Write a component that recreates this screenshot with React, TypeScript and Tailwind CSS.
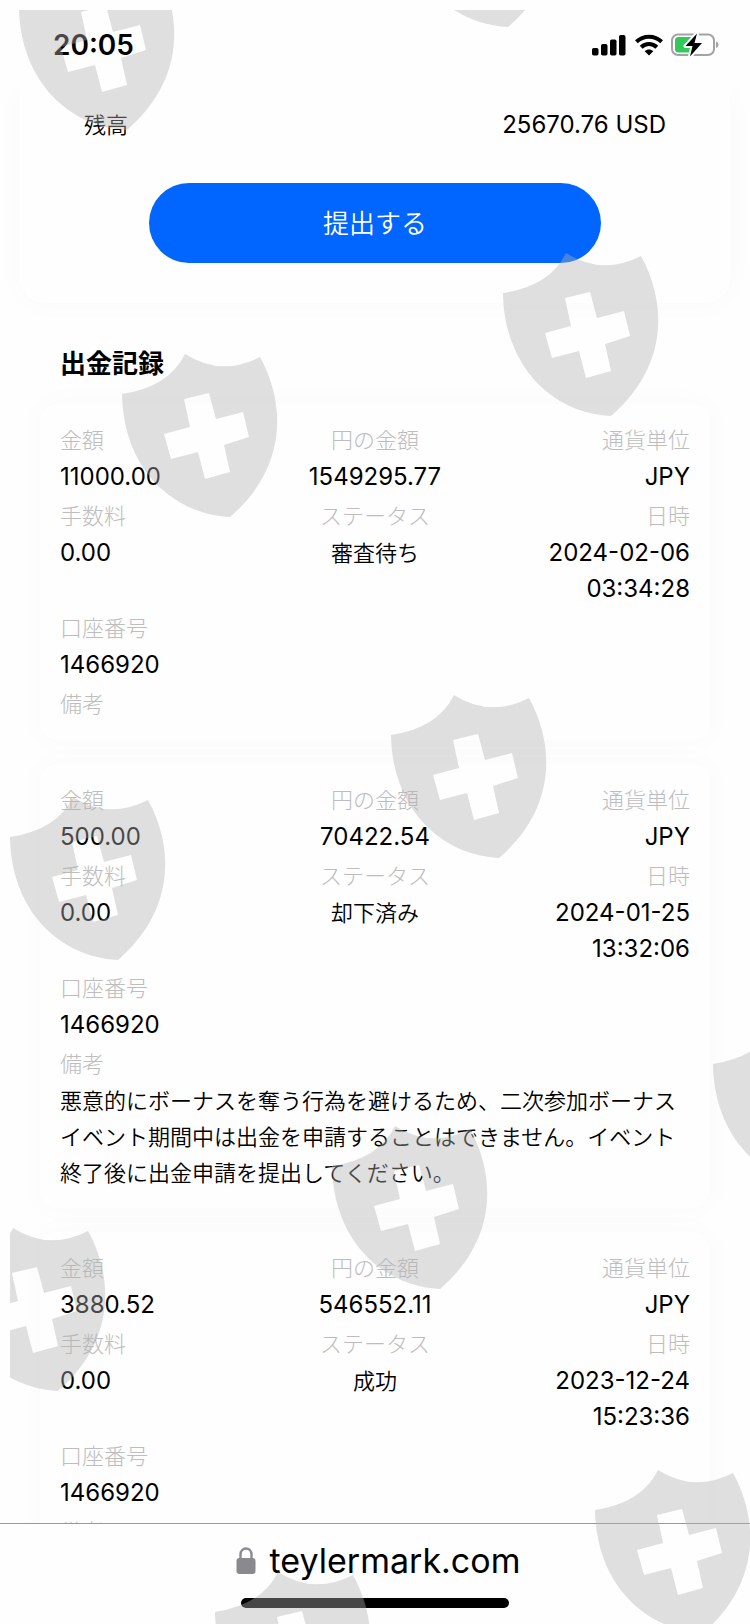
import clsx from 'clsx';

type WithdrawalRecord = {
  amount: string;
  yenAmount: string;
  currency: string;
  fee: string;
  status: string;
  date: string;
  account: string;
  remark?: string;
};

const records: WithdrawalRecord[] = [
  {
    amount: '11000.00',
    yenAmount: '1549295.77',
    currency: 'JPY',
    fee: '0.00',
    status: '審査待ち',
    date: '2024-02-06 03:34:28',
    account: '1466920',
  },
  {
    amount: '500.00',
    yenAmount: '70422.54',
    currency: 'JPY',
    fee: '0.00',
    status: '却下済み',
    date: '2024-01-25 13:32:06',
    account: '1466920',
    remark:
      '悪意的にボーナスを奪う行為を避けるため、二次参加ボーナスイベント期間中は出金を申請することはできません。イベント終了後に出金申請を提出してください。',
  },
  {
    amount: '3880.52',
    yenAmount: '546552.11',
    currency: 'JPY',
    fee: '0.00',
    status: '成功',
    date: '2023-12-24 15:23:36',
    account: '1466920',
  },
];

const shields = [
  { x: 8, y: -43 },
  { x: 389, y: -146 },
  { x: 492, y: 243 },
  { x: 111, y: 344 },
  { x: 380, y: 685 },
  { x: -1, y: 787 },
  { x: 702, y: 1014 },
  { x: 321, y: 1116 },
  { x: -61, y: 1218 },
  { x: 204, y: 1562 },
  { x: 584, y: 1460 },
];

function Watermark() {
  return (
    <div className="pointer-events-none absolute top-2.5 right-0 bottom-0 left-2.5 overflow-hidden" aria-hidden="true">
      <svg className="size-full" fill="#b1b1b1" fillOpacity="0.4">
        <defs>
          <path
            id="shield"
            fillRule="evenodd"
            d="M1 40Q48 33 64 0Q100 23 139 3C166 52 165 115 109 163C50 160 2 113 1 40ZM63 45L88 39L95 65L122 58L128 83L103 91L109 118L84 125L77 98L50 105L43 80L69 73Z"
          />
        </defs>
        {shields.map(({ x, y }) => (
          <use key={`${x}-${y}`} href="#shield" x={x} y={y} />
        ))}
      </svg>
    </div>
  );
}

function StatusBar() {
  return (
    <header className="flex h-22 shrink-0 items-center justify-between bg-[#fefefe] pt-0.5 pr-[31px] pl-[53px]">
      <time className="text-[28px] font-semibold">20:05</time>
      <div className="flex items-center gap-2">
        <svg className="h-6 w-[35px]" viewBox="0 0 35 24">
          <rect x="0" y="15" width="6.5" height="7.5" rx="1.8" />
          <rect x="9" y="11" width="6.5" height="11.5" rx="1.8" />
          <rect x="18" y="6.5" width="6.5" height="16" rx="1.8" />
          <rect x="27" y="2" width="6.5" height="20.5" rx="1.8" />
        </svg>
        <svg className="h-6 w-7" viewBox="0 0 28 24" fill="none" stroke="#000" strokeWidth="4">
          <path d="M1.4 8.8C8.4 2 19.6 2 26.6 8.8" />
          <path d="M6.2 14.2C10.6 10 17.4 10 21.8 14.2" />
          <path d="M14 22.4L9.7 18.2C12.2 16 15.8 16 18.3 18.2Z" fill="#000" stroke="none" />
        </svg>
        <svg className="h-6 w-12" viewBox="0 0 48 24">
          <rect x="1" y="1.5" width="42" height="20.5" rx="6" fill="none" stroke="#a3a3a3" strokeWidth="2" />
          <path d="M45 8.5C48.4 9.7 48.4 13.9 45 15.1Z" fill="#a3a3a3" />
          <path d="M7.5 4H20V19.5H7.5Q4 19.5 4 16V7.5Q4 4 7.5 4Z" fill="#34c759" />
          <path
            d="M26 0.5L14.5 13H21.5L19 23.5L31 10H23.5Z"
            stroke="#fff"
            strokeWidth="4"
            strokeLinejoin="round"
          />
          <path d="M26 0.5L14.5 13H21.5L19 23.5L31 10H23.5Z" />
        </svg>
      </div>
    </header>
  );
}

type FieldProps = {
  label: string;
  value?: string;
  numeric?: boolean;
  className?: string;
};

function Field({ label, value, numeric, className }: FieldProps) {
  return (
    <div className={clsx('leading-9', className)}>
      <dt className="pb-px font-light text-[#bdbdbd]">{label}</dt>
      <dd className={numeric ? 'text-2xl leading-9' : 'font-[350]'}>{value}</dd>
    </div>
  );
}

function RecordCard({ record }: { record: WithdrawalRecord }) {
  return (
    <li className="rounded-2xl bg-[#fefefe] px-5 pt-[18px] pb-[17px] shadow-[0_0_32px_rgba(0,0,0,0.025)]">
      <dl className="grid grid-cols-3 gap-y-[3px]">
        <Field label="金額" value={record.amount} numeric />
        <Field label="円の金額" value={record.yenAmount} numeric className="text-center" />
        <Field label="通貨単位" value={record.currency} numeric className="text-right" />
        <Field label="手数料" value={record.fee} numeric />
        <Field label="ステータス" value={record.status} className="text-center" />
        <Field label="日時" value={record.date} numeric className="text-right" />
        <Field label="口座番号" value={record.account} numeric className="col-span-3" />
        <Field label="備考" value={record.remark} className="col-span-3" />
      </dl>
    </li>
  );
}

export default function App() {
  return (
    <div
      lang="ja"
      className="relative flex h-screen flex-col overflow-hidden bg-[#fefefe] font-['Inter','Noto_Sans_CJK_JP',sans-serif] text-[22px] text-black"
    >
      <StatusBar />

      <main className="min-h-0 flex-1 overflow-y-auto [scrollbar-width:none]">
        <section className="mx-5 rounded-b-3xl bg-[#fefefe] px-16 pt-[19px] pb-10 shadow-[0_0_32px_rgba(0,0,0,0.025)]">
          <div className="flex justify-between leading-9">
            <span className="font-[350]">残高</span>
            <span className="text-2xl leading-9">25670.76 USD</span>
          </div>
          <button
            type="button"
            className="mx-auto mt-10 block h-20 w-[452px] max-w-full rounded-full bg-[#0066ff] text-[26px] font-[350] text-white"
          >
            提出する
          </button>
        </section>

        <section className="px-10">
          <h2 className="mt-[41px] px-5 text-[26px] leading-10 font-bold">出金記録</h2>
          <ul className="mt-5 flex flex-col gap-6">
            {records.map((record) => (
              <RecordCard key={record.date} record={record} />
            ))}
          </ul>
        </section>
      </main>

      <footer className="flex h-[101px] shrink-0 flex-col items-center justify-between border-t border-[#999999] bg-[#fefefe] pt-3 pb-4">
        <div className="flex items-center gap-3.5 pl-1.5 text-[34px] leading-[50px]">
          <svg className="h-7 w-5" viewBox="0 0 20 28" fill="#8a898e">
            <rect x="0.5" y="11" width="19" height="16" rx="3" />
            <path d="M4.5 12V7.5C4.5 -0.5 15.5 -0.5 15.5 7.5V12" fill="none" stroke="#8a898e" strokeWidth="2.4" />
          </svg>
          <span>teylermark.com</span>
        </div>
        <div className="h-2.5 w-[268px] rounded-full bg-black" />
      </footer>

      <Watermark />
    </div>
  );
}
